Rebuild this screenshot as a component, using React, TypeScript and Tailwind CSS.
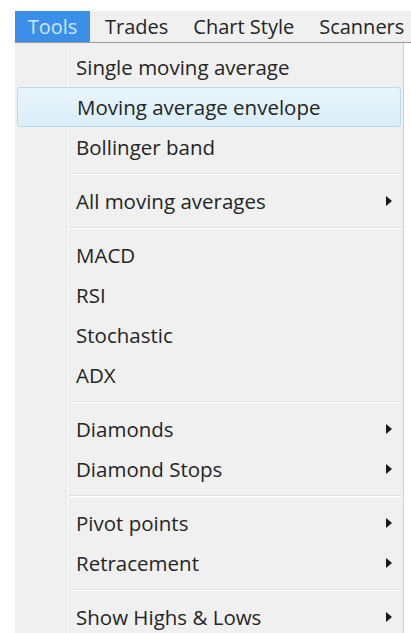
import React from "react";

type Entry =
  | { kind: "item"; label: string; sub?: boolean; hot?: boolean }
  | { kind: "sep" };

const entries: Entry[] = [
  { kind: "item", label: "Single moving average" },
  { kind: "item", label: "Moving average envelope", hot: true },
  { kind: "item", label: "Bollinger band" },
  { kind: "sep" },
  { kind: "item", label: "All moving averages", sub: true },
  { kind: "sep" },
  { kind: "item", label: "MACD" },
  { kind: "item", label: "RSI" },
  { kind: "item", label: "Stochastic" },
  { kind: "item", label: "ADX" },
  { kind: "sep" },
  { kind: "item", label: "Diamonds", sub: true },
  { kind: "item", label: "Diamond Stops", sub: true },
  { kind: "sep" },
  { kind: "item", label: "Pivot points", sub: true },
  { kind: "item", label: "Retracement", sub: true },
  { kind: "sep" },
  { kind: "item", label: "Show Highs & Lows", sub: true },
];

function Arrow() {
  return (
    <svg width="6" height="10" viewBox="0 0 6 10" className="block">
      <path d="M0 0 L6 5 L0 10 Z" fill="#1a1a1a" />
    </svg>
  );
}

function Gutter() {
  return (
    <div className="w-[52px] shrink-0 self-stretch border-r border-[#e2e3e3] shadow-[1px_0_0_#ffffff]" />
  );
}

export default function App() {
  const font = { fontFamily: '"Open Sans", "Noto Sans", sans-serif' };
  return (
    <div className="min-h-screen bg-white pt-[11px] pl-[15px]" style={font}>
      {/* menu bar */}
      <div className="flex h-[32px] items-stretch bg-[#f0f0f0] border-b border-[#9a9a9a] text-[20px] text-[#252525]">
        <div className="flex w-[75px] items-center justify-center bg-[#3b8fe8] text-[#cfe7ff]">
          Tools
        </div>
        <div className="flex items-center pl-[15px]">Trades</div>
        <div className="flex items-center pl-[25px]">Chart Style</div>
        <div className="flex items-center pl-[25px]">Scanners</div>
      </div>

      {/* drop-down */}
      <div className="w-[389px] bg-[#f0f0f0] border-r border-[#cfcfcf] pt-[4px] text-[20.5px] text-[#252525]">
        {entries.map((e, i) =>
          e.kind === "sep" ? (
            <div key={i} className="flex h-[14px]">
              <Gutter />
              <div className="flex flex-1 items-center pl-[2px] pr-[2px]">
                <div className="h-[2px] w-full border-t border-[#e0e0e0] border-b border-b-white" />
              </div>
            </div>
          ) : e.hot ? (
            <div
              key={i}
              className="mx-[2px] flex h-[40px] items-center rounded-[3px] border border-[#b8dcef] bg-gradient-to-b from-[#e9f5fb] to-[#d9eef8]"
            >
              <div className="w-[59px] shrink-0" />
              <span className="flex-1">{e.label}</span>
            </div>
          ) : (
            <div key={i} className="flex h-[40px] items-center">
              <Gutter />
              <span className="flex-1 pl-[9px]">{e.label}</span>
              {e.sub && (
                <span className="pr-[11px]">
                  <Arrow />
                </span>
              )}
            </div>
          )
        )}
      </div>
    </div>
  );
}
